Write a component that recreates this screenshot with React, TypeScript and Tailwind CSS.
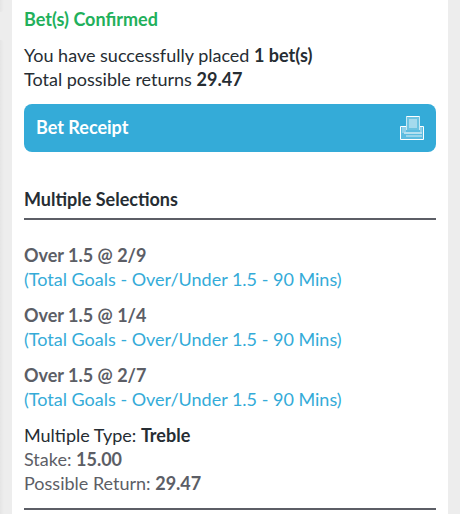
import { clsx } from 'clsx';

const selections = [
  { id: 1, pick: 'Over 1.5', odds: '2/9', market: 'Total Goals - Over/Under 1.5 - 90 Mins' },
  { id: 2, pick: 'Over 1.5', odds: '1/4', market: 'Total Goals - Over/Under 1.5 - 90 Mins' },
  { id: 3, pick: 'Over 1.5', odds: '2/7', market: 'Total Goals - Over/Under 1.5 - 90 Mins' },
];

const summary = [
  { label: 'Multiple Type:', value: 'Treble', strong: true },
  { label: 'Stake:', value: '15.00', strong: false },
  { label: 'Possible Return:', value: '29.47', strong: false },
];

function PrinterIcon() {
  return (
    <svg width="24" height="24" viewBox="0 0 24 24" fill="none">
      {/* tray */}
      <path d="M.5 10.5h23v13H.5z" fill="#5cbce0" stroke="#fff" />
      <path d="M2 11h4v6H2zM20 11h2v6h-2z" fill="#8fd0e9" />
      {/* paper */}
      <path d="M6 0h14v14H6z" fill="#c5e8f4" />
      <path d="M7 1h12v13H7z" fill="#6cc3e1" />
      <path d="M7 .5h12" stroke="#fff" />
      <path d="M9 3h8v9H9z" fill="#a5daed" />
      {/* output slot */}
      <path d="M4 16h18v2H4z" fill="#b5e0f0" />
      <path d="M6 19h16v2H6z" fill="#9ad5ea" />
    </svg>
  );
}

export default function App() {
  return (
    <div className="flex h-screen overflow-hidden bg-[#ededed] pr-3 font-['Lato',sans-serif] text-[18px] leading-6 text-[#262d33]">
      {/* Shadows of the neighbouring panels */}
      <div className="flex w-3 shrink-0 flex-col gap-7 overflow-hidden">
        <div className="h-3 w-1 rounded-br bg-linear-to-r from-[#e5e5e5] to-[#ededed]" />
        <div className="w-1 flex-1 rounded-tr bg-linear-to-r from-[#e5e5e5] to-[#ededed]" />
      </div>

      <main className="flex-1 bg-white px-3 pt-[7px]">
        <h1 className="font-bold text-[#22b05b]">Bet(s) Confirmed</h1>

        <div className="mt-3">
          <p>You have successfully placed <b className="font-bold">1 bet(s)</b></p>
          <p>Total possible returns <b className="font-bold">29.47</b></p>
        </div>

        <button className="mt-[13px] flex h-12 w-full items-center justify-between rounded-lg bg-[#34abd8] px-3 font-bold text-white">
          <span className="pb-0.5">Bet Receipt</span>
          <PrinterIcon />
        </button>

        {/* Selections */}
        <h2 className="mt-[35px] border-b-2 border-[#5c5e66] pb-[7px] font-bold">Multiple Selections</h2>
        <ul className="mt-[23px] space-y-3">
          {selections.map((s) => (
            <li key={s.id}>
              <p className="font-bold text-[#5c5e66]">{s.pick} @ {s.odds}</p>
              <p className="text-[#34abd8]">({s.market})</p>
            </li>
          ))}
        </ul>

        {/* Stake and returns */}
        <div className="mt-3 border-b-2 border-[#5c5e66] pb-[13px]">
          {summary.map((row) => (
            <p key={row.label} className={clsx(!row.strong && 'text-[#5c5e66]')}>
              {row.label} <b className="font-bold">{row.value}</b>
            </p>
          ))}
        </div>
      </main>
    </div>
  );
}
